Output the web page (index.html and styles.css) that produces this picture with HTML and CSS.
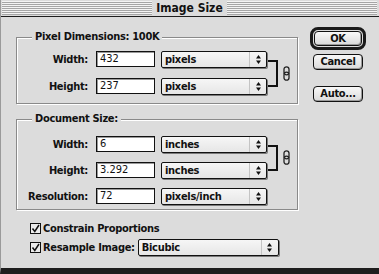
FILE: index.html
```html
<!DOCTYPE html>
<html lang="en">
<head>
    <meta charset="UTF-8">
    <title>Image Size</title>
    <link rel="stylesheet" href="styles.css">
</head>
<body>
    <div class="window">
        <!-- Title bar -->
        <div class="titlebar">
            <div class="stripes"><span class="title">Image Size</span></div>
        </div>

        <div class="dialog">
            <div class="main">
                <!-- Pixel Dimensions -->
                <div class="group group-pixels">
                    <div class="group-title">Pixel Dimensions: 100K</div>
                    <div class="fields">
                        <div class="field-label">Width:</div>
                        <div class="input">432</div>
                        <div class="popup"><span class="popup-text">pixels</span><span class="popup-arrow"><svg width="5" height="9" viewBox="0 0 5 9"><polygon points="0,3.5 2.5,0 5,3.5"/><polygon points="0,5.5 2.5,9 5,5.5"/></svg></span></div>
                        <div class="bracket"></div>
                        <div class="link"><svg width="7" height="15" viewBox="0 0 7 15"><rect x="1" y="0.8" width="5" height="8" rx="2.5"/><rect x="1" y="6.2" width="5" height="8" rx="2.5"/></svg></div>

                        <div class="field-label">Height:</div>
                        <div class="input">237</div>
                        <div class="popup"><span class="popup-text">pixels</span><span class="popup-arrow"><svg width="5" height="9" viewBox="0 0 5 9"><polygon points="0,3.5 2.5,0 5,3.5"/><polygon points="0,5.5 2.5,9 5,5.5"/></svg></span></div>
                    </div>
                </div>

                <!-- Document Size -->
                <div class="group group-document">
                    <div class="group-title">Document Size:</div>
                    <div class="fields">
                        <div class="field-label">Width:</div>
                        <div class="input">6</div>
                        <div class="popup"><span class="popup-text">inches</span><span class="popup-arrow"><svg width="5" height="9" viewBox="0 0 5 9"><polygon points="0,3.5 2.5,0 5,3.5"/><polygon points="0,5.5 2.5,9 5,5.5"/></svg></span></div>
                        <div class="bracket"></div>
                        <div class="link"><svg width="7" height="15" viewBox="0 0 7 15"><rect x="1" y="0.8" width="5" height="8" rx="2.5"/><rect x="1" y="6.2" width="5" height="8" rx="2.5"/></svg></div>

                        <div class="field-label">Height:</div>
                        <div class="input">3.292</div>
                        <div class="popup"><span class="popup-text">inches</span><span class="popup-arrow"><svg width="5" height="9" viewBox="0 0 5 9"><polygon points="0,3.5 2.5,0 5,3.5"/><polygon points="0,5.5 2.5,9 5,5.5"/></svg></span></div>

                        <div class="field-label">Resolution:</div>
                        <div class="input">72</div>
                        <div class="popup"><span class="popup-text">pixels/inch</span><span class="popup-arrow"><svg width="5" height="9" viewBox="0 0 5 9"><polygon points="0,3.5 2.5,0 5,3.5"/><polygon points="0,5.5 2.5,9 5,5.5"/></svg></span></div>
                    </div>
                </div>

                <!-- Options -->
                <div class="options">
                    <div class="option">
                        <span class="checkbox"><svg width="9" height="9" viewBox="0 0 9 9"><path d="M1.5 4.5 L3.8 7.5 L8 1"/></svg></span>
                        <span>Constrain Proportions</span>
                    </div>
                    <div class="option">
                        <span class="checkbox"><svg width="9" height="9" viewBox="0 0 9 9"><path d="M1.5 4.5 L3.8 7.5 L8 1"/></svg></span>
                        <span>Resample Image:</span>
                        <div class="popup popup-wide"><span class="popup-text">Bicubic</span><span class="popup-arrow"><svg width="5" height="9" viewBox="0 0 5 9"><polygon points="0,3.5 2.5,0 5,3.5"/><polygon points="0,5.5 2.5,9 5,5.5"/></svg></span></div>
                    </div>
                </div>
            </div>

            <!-- Buttons -->
            <div class="side">
                <div class="default-ring"><div class="btn">OK</div></div>
                <div class="btn">Cancel</div>
                <div class="btn btn-auto">Auto...</div>
            </div>
        </div>
    </div>
</body>
</html>
```

FILE: styles.css
```css
/* Mac OS platinum dialog */
* {
    box-sizing: border-box;
}

body {
    margin: 0;
    background: #dcdcdc;
    font-family: "DejaVu Sans Condensed", "DejaVu Sans", sans-serif;
    font-stretch: condensed;
    font-weight: bold;
    font-size: 11px;
    letter-spacing: -0.3px;
    color: #111;
}

.window {
    width: 379px;
    height: 274px;
    display: flex;
    flex-direction: column;
    border-left: 1px solid #9a9a9a;
    border-bottom: 6px solid #1e1e1e;
}

/* Title bar */
.titlebar {
    height: 17px;
    padding: 1px 2px 1px 1px;
    border-bottom: 1px solid #1e1e1e;
    display: flex;
}

.stripes {
    flex: 1;
    display: flex;
    justify-content: center;
    align-items: center;
    background: repeating-linear-gradient(to bottom, #f4f4f4 0 1px, #a6a6a6 1px 2px);
}

.title {
    background: #dcdcdc;
    padding: 0 4px;
    font-size: 12px;
    line-height: 14px;
    letter-spacing: 0;
}

.dialog {
    flex: 1;
    display: flex;
}

.main {
    width: 298px;
    padding-left: 15px;
}

/* Group boxes */
.group {
    border: 1px solid #8a8a8a;
    box-shadow: inset 1px 1px 0 #fff, 1px 1px 0 #fff;
    width: 282px;
}

.group-pixels {
    margin-top: 20px;
    padding-bottom: 8px;
}

.group-document {
    margin-top: 15px;
    padding-bottom: 4px;
}

.group-title {
    width: max-content;
    margin: -8px 0 0 15px;
    padding: 0 3px;
    background: #dcdcdc;
    line-height: 14px;
}

.fields {
    display: grid;
    grid-template-columns: 79px 65px 107px 15px 8px;
    grid-auto-rows: 17px;
}

.group-pixels .fields {
    margin-top: 7px;
    row-gap: 10px;
}

.group-document .fields {
    margin-top: 10px;
    row-gap: 9px;
}

.field-label {
    width: 71px;
    text-align: right;
    line-height: 17px;
}

.input {
    width: 59px;
    height: 16px;
    background: #fff;
    border: 1px solid #111;
    box-shadow: inset 1px 1px 0 #9a9a9a;
    padding-left: 3px;
    font-weight: normal;
    letter-spacing: 0;
    line-height: 14px;
}

/* Popup menus */
.popup {
    width: 106px;
    height: 17px;
    display: flex;
    background: linear-gradient(#f6f6f6, #e6e6e6);
    border: 1px solid #111;
    border-radius: 2px;
    box-shadow: 1px 1px 0 #7a7a7a;
}

.popup-text {
    flex: 1;
    padding-left: 3px;
    line-height: 15px;
}

.popup-arrow {
    width: 17px;
    display: flex;
    justify-content: center;
    align-items: center;
    border-left: 1px solid #c4c4c4;
}

.popup-arrow svg {
    fill: #111;
}

.popup-wide {
    width: 141px;
    margin-left: 3px;
}

/* Link bracket */
.bracket {
    grid-column: 4;
    grid-row: 1 / 3;
    width: 10px;
    margin: 9px 0 8px;
    border: 2px solid #111;
    border-left: none;
}

.link {
    grid-column: 5;
    grid-row: 1 / 3;
    display: flex;
    align-items: center;
}

.link svg {
    fill: none;
    stroke: #222;
    stroke-width: 1.3;
}

/* Check boxes */
.options {
    margin-top: 10px;
    padding-left: 14px;
    display: flex;
    flex-direction: column;
    gap: 3px;
}

.option {
    height: 16px;
    display: flex;
    align-items: center;
}

.option:last-child {
    height: 17px;
}

.checkbox {
    width: 11px;
    height: 11px;
    margin-right: 2px;
    border: 1px solid #111;
    background: #ececec;
    display: flex;
}

.checkbox svg {
    fill: none;
    stroke: #111;
    stroke-width: 1.5;
}

/* Buttons */
.side {
    width: 56px;
    margin-left: 11px;
    padding-top: 10px;
    display: flex;
    flex-direction: column;
    align-items: center;
}

.default-ring {
    padding: 1px;
    border: 3px solid #1a1a1a;
    border-radius: 8px;
}

.btn {
    width: 50px;
    height: 16px;
    border: 1px solid #111;
    border-radius: 4px;
    background: linear-gradient(#f8f8f8, #dadada);
    box-shadow: inset -1px -1px 0 #9a9a9a;
    text-align: center;
    line-height: 14px;
}

.default-ring .btn {
    width: 48px;
    height: 15px;
    line-height: 13px;
}

.default-ring + .btn {
    margin-top: 4px;
}

.btn-auto {
    margin-top: 16px;
}
```
